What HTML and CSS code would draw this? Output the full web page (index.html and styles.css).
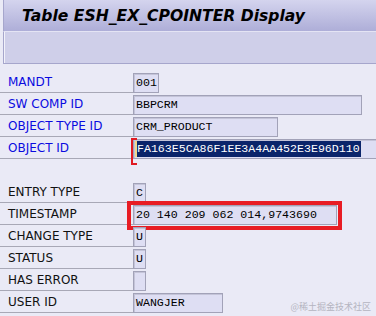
FILE: index.html
```html
<!DOCTYPE html>
<html lang="en">
<head>
    <meta charset="UTF-8">
    <meta name="viewport" content="width=device-width, initial-scale=1.0">
    <title>Table ESH_EX_CPOINTER Display</title>
    <link rel="stylesheet" href="styles.css">
</head>
<body>
    <div class="window">
        <div class="titlebar">
            <h1>Table ESH_EX_CPOINTER Display</h1>
        </div>
        <div class="toolbar"></div>

        <div class="content">
            <div class="group">
                <div class="row">
                    <span class="label key">MANDT</span>
                    <span class="field" style="width: 26px">001</span>
                </div>
                <div class="row">
                    <span class="label key">SW COMP ID</span>
                    <span class="field" style="width: 229px">BBPCRM</span>
                </div>
                <div class="row">
                    <span class="label key">OBJECT TYPE ID</span>
                    <span class="field" style="width: 145px">CRM_PRODUCT</span>
                </div>
                <div class="row">
                    <span class="label key">OBJECT ID</span>
                    <span class="field focused" style="width: 260px"><span class="cursor"></span><span class="selected">FA163E5CA86F1EE3A4AA452E3E96D110</span></span>
                </div>
            </div>

            <div class="group">
                <div class="row">
                    <span class="label">ENTRY TYPE</span>
                    <span class="field" style="width: 13px">C</span>
                </div>
                <div class="row">
                    <span class="label">TIMESTAMP</span>
                    <span class="field marked" style="width: 204px">20 140 209 062 014,9743690</span>
                </div>
                <div class="row">
                    <span class="label">CHANGE TYPE</span>
                    <span class="field" style="width: 13px">U</span>
                </div>
                <div class="row">
                    <span class="label">STATUS</span>
                    <span class="field" style="width: 13px">U</span>
                </div>
                <div class="row">
                    <span class="label">HAS ERROR</span>
                    <span class="field" style="width: 13px"></span>
                </div>
                <div class="row">
                    <span class="label">USER ID</span>
                    <span class="field" style="width: 90px">WANGJER</span>
                </div>
            </div>
        </div>

        <div class="watermark">@稀土掘金技术社区</div>
    </div>
</body>
</html>
```

FILE: styles.css
```css
body {
    margin: 0;
    background: #eaeaf6;
    font-family: "DejaVu Sans", sans-serif;
    overflow: hidden;
}
.window {
    position: relative;
    width: 376px;
    height: 316px;
    overflow: hidden;
}
.titlebar {
    height: 32px;
    margin-left: 3px;
    border-left: 1px solid #a6a6cc;
    background: linear-gradient(#d4d4ee, #aeaed8);
    border-bottom: 1px solid #e4e4f4;
    box-sizing: border-box;
}
.titlebar h1 {
    margin: 0;
    padding: 7px 0 0 18px;
    font-size: 15.6px;
    font-weight: bold;
    font-style: italic;
    color: #000;
    line-height: 18px;
}
.toolbar {
    height: 32px;
    margin-left: 3px;
    background: #cfcfe9;
    border-left: 1px solid #a6a6cc;
    box-shadow: inset 1px 0 0 #f2f2fa;
    border-bottom: 1px solid #a6a6cc;
    box-sizing: border-box;
}
.content {
    padding-top: 7px;
}
.group {
    margin-bottom: 22px;
}
.row {
    display: flex;
    height: 22px;
}
.label {
    width: 133px;
    flex: none;
    box-sizing: border-box;
    padding-left: 8px;
    border-bottom: 1px solid #a8a8b6;
    font-size: 12px;
    line-height: 22px;
    color: #111;
}
.label.key {
    color: #0a0ae0;
}
.field {
    position: relative;
    flex: none;
    box-sizing: border-box;
    height: 20px;
    margin-top: 2px;
    padding-left: 2px;
    background: #dedef3;
    border: 1px solid #a2a2b8;
    box-shadow: inset 1px 1px 0 #c4c4d8;
    font-family: "Liberation Mono", monospace;
    font-size: 11.6px;
    line-height: 18px;
    color: #000;
    white-space: nowrap;
}
.field.focused {
    display: flex;
    align-items: center;
    padding-left: 1px;
}
.field.focused::before {
    content: "";
    position: absolute;
    left: -3px;
    top: -2px;
    width: 4px;
    height: 23px;
    border: 2px solid #e01a22;
    border-right: none;
}
.cursor {
    width: 2px;
    height: 16px;
    background: #f2d88c;
}
.selected {
    background: #0a246a;
    color: #fff;
    line-height: 16px;
    padding-right: 1px;
}
.field.marked::after {
    content: "";
    position: absolute;
    left: -7px;
    top: -5px;
    width: 207px;
    height: 21px;
    border: 4px solid #e81c24;
}
.watermark {
    position: absolute;
    right: 5px;
    bottom: 3px;
    font-family: "Noto Sans CJK SC", sans-serif;
    font-size: 9px;
    color: #b4b4c0;
}
```
